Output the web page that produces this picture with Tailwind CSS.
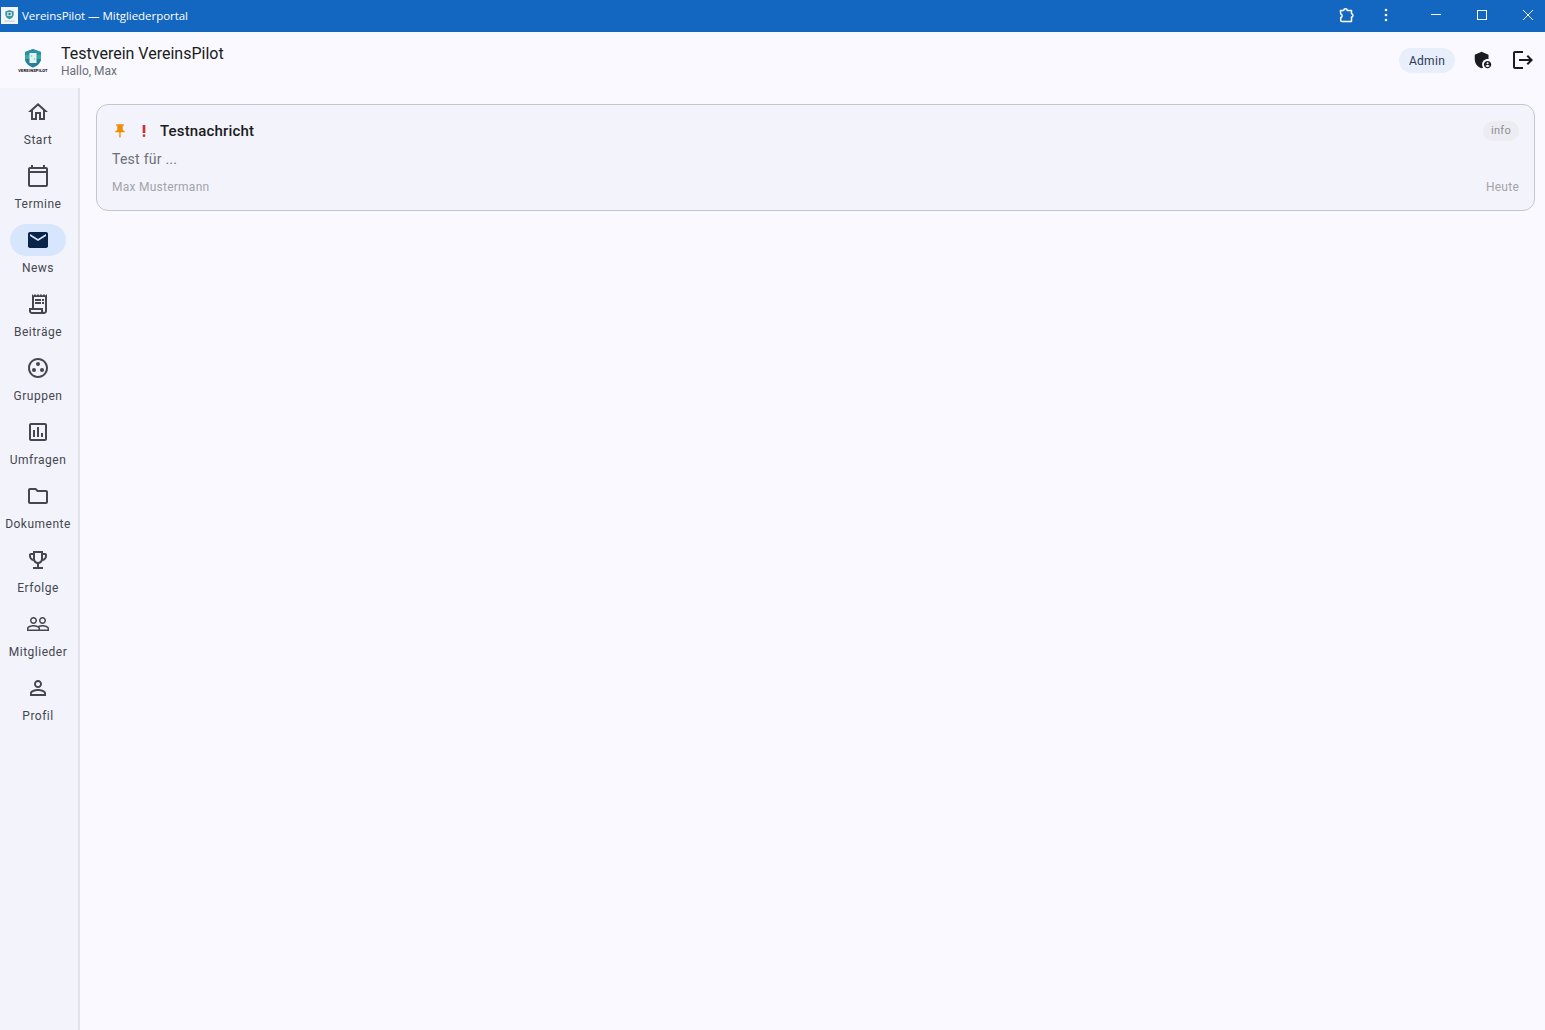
<!DOCTYPE html>
<html lang="de">
<head>
<meta charset="utf-8">
<title>VereinsPilot — Mitgliederportal</title>
<script src="https://cdn.jsdelivr.net/npm/@tailwindcss/browser@4"></script>
</head>
<body class="h-[1030px] w-[1545px] overflow-hidden bg-[#f9f9ff] font-['Roboto',sans-serif] text-[#1a1c20] flex flex-col">

<!-- Window title bar -->
<div class="h-8 shrink-0 bg-[#1467c0] flex items-center text-white">
  <div class="w-[17px] h-[17px] ml-[1px] mb-[1px] bg-[#f2f6f8] flex items-center justify-center">
    <svg viewBox="0 0 16 16" class="w-[15px] h-[15px]"><path d="M8 2l4.500 1.600v3.400c0 2.500-2 4.200-4.500 5-2.500-.8-4.500-2.500-4.500-5V3.600z" fill="#3c9aa5"/><path d="M5.500 4.500h5v4h-5z" fill="#cfe8e6"/><circle cx="8" cy="6.500" r="1.300" fill="#2f7f8a"/><path d="M2.500 14h11" stroke="#b9cdd6" stroke-width="1"/></svg>
  </div>
  <span class="ml-1 mb-[1px] font-['Open_Sans',sans-serif] text-[11.5px] tracking-[-0.04px] leading-none">VereinsPilot — Mitgliederportal</span>
  <div class="ml-auto flex items-center mb-[2px]">
    <svg viewBox="0 0 16 16" class="w-4 h-4 mr-[28px] -translate-x-[1px]" fill="none" stroke="white" stroke-width="1.500" stroke-linejoin="round"><path d="M1.500 3.500h3.200c.1-2.200 3.400-2.200 3.500 0h4.300v3.200c1.900.2 1.900 3.200 0 3.400v4.400h-9.500c-.8 0-1.300-.5-1.300-1.300v-2.700c1.900-.3 1.900-3.200 0-3.500z"/></svg>
    <svg viewBox="0 0 4 14" class="w-1 h-3.5 mr-[43px]" fill="white"><circle cx="2" cy="2" r="1.300"/><circle cx="2" cy="7" r="1.300"/><circle cx="2" cy="12" r="1.300"/></svg>
    <svg viewBox="0 0 10 10" class="w-2.5 h-2.5 mr-[36px]" fill="none" stroke="white" stroke-width="1"><path d="M0 4.500h10"/></svg>
    <svg viewBox="0 0 10 10" class="w-2.5 h-2.5 mr-[36px]" fill="none" stroke="white" stroke-width="1"><rect x=".5" y=".5" width="9" height="9"/></svg>
    <svg viewBox="0 0 10 10" class="w-2.5 h-2.5 mr-3" fill="none" stroke="white" stroke-width="1"><path d="M0 0l10 10M10 0L0 10"/></svg>
  </div>
</div>

<!-- App header -->
<div class="h-14 shrink-0 flex items-center">
  <div class="w-[61px] shrink-0 flex justify-center">
    <div class="flex flex-col items-center ml-[5px]">
      <svg viewBox="0 0 20 20" class="w-[20px] h-[20px]"><path d="M10 1l8 3v6c0 5-3.500 8-8 9.500C5.500 18 2 15 2 10V4z" fill="#35ad9c"/><path d="M10 1l8 3v3H2V4z" fill="#2c8fa6"/><path d="M2 11h16c-.5 4-4 7-8 8.500C6 18 2.500 15 2 11z" fill="#2a7f98"/><rect x="6.500" y="5" width="7" height="10" fill="#e4f3f2"/><circle cx="8.500" cy="8" r=".8" fill="#7fbfc6"/><circle cx="11.500" cy="11" r=".8" fill="#7fbfc6"/></svg>
      <span class="text-[4px] leading-[4px] font-bold tracking-[0.2px] text-black mt-[1px] whitespace-nowrap">VEREINSPILOT</span>
    </div>
  </div>
  <div class="flex flex-col mt-[2px]">
    <span class="text-base leading-[20px] text-[#1a1c20]">Testverein VereinsPilot</span>
    <span class="text-[12px] leading-[14px] text-[#6d6f76]">Hallo, Max</span>
  </div>
  <div class="ml-auto flex items-center">
    <div class="h-[25px] w-14 rounded-full bg-[#e8eefc] flex items-center justify-center pt-[1px] text-[12px] tracking-[0.3px] text-[#2b3a55] mr-[1px]">Admin</div>
    <svg viewBox="0 0 24 24" class="w-[22px] h-[22px] ml-[16px]" fill="#1a1c20"><path d="M17 11c.34 0 .67.04 1 .09V6.270L10.500 3 3 6.270v4.910c0 4.540 3.200 8.790 7.500 9.820.55-.13 1.080-.32 1.600-.55-.69-.98-1.100-2.170-1.100-3.450 0-3.310 2.690-6 6-6z"/><path d="M17 13c-2.210 0-4 1.790-4 4s1.790 4 4 4 4-1.790 4-4-1.790-4-4-4zm0 1.380c.62 0 1.120.51 1.120 1.120s-.51 1.120-1.120 1.120-1.120-.51-1.120-1.120.5-1.120 1.120-1.120zm0 5.370c-.93 0-1.740-.46-2.240-1.170.05-.72 1.510-1.080 2.240-1.080s2.190.36 2.240 1.080c-.5.71-1.310 1.170-2.240 1.170z"/></svg>
    <svg viewBox="0 0 24 24" class="w-6 h-6 ml-[17px] mr-2.5" fill="#1a1c20"><path d="M17 7l-1.410 1.410L18.170 11H8v2h10.170l-2.580 2.580L17 17l5-5zM4 5h8V3H4c-1.100 0-2 .9-2 2v14c0 1.100.9 2 2 2h8v-2H4V5z"/></svg>
  </div>
</div>

<div class="flex-1 flex min-h-0">
  <!-- Navigation rail -->
  <nav class="w-20 shrink-0 bg-[#f3f3fb] border-r-2 border-[#e2e2e9] pt-2 pr-[2px] flex flex-col items-center gap-3 text-[12px] leading-4 tracking-[0.5px] text-[#44474e]">
    <a class="flex flex-col items-center gap-1"><span class="w-14 h-8 flex items-center justify-center"><svg viewBox="0 0 24 24" class="w-6 h-6" fill="#44474e"><path d="M12 5.690l5 4.500V18h-2v-6H9v6H7v-7.810l5-4.500M12 3L2 12h3v8h6v-6h2v6h6v-8h3L12 3z"/></svg></span><span>Start</span></a>
    <a class="flex flex-col items-center gap-1"><span class="w-14 h-8 flex items-center justify-center"><svg viewBox="0 0 24 24" class="w-6 h-6" fill="#44474e" fill-rule="evenodd"><path d="M20 3h-1V1h-2v2H7V1H5v2H4c-1.100 0-2 .9-2 2v16c0 1.100.9 2 2 2h16c1.100 0 2-.9 2-2V5c0-1.100-.9-2-2-2zm0 18H4V9h16v12zm0-14H4V5h16v2z"/></svg></span><span>Termine</span></a>
    <a class="flex flex-col items-center gap-1"><span class="w-14 h-8 rounded-full bg-[#d8e6fd] flex items-center justify-center"><svg viewBox="0 0 24 24" class="w-6 h-6" fill="#0a2348"><path d="M20 4H4c-1.100 0-1.990.9-1.990 2L2 18c0 1.100.9 2 2 2h16c1.100 0 2-.9 2-2V6c0-1.100-.9-2-2-2zm0 4l-8 5-8-5V6l8 5 8-5v2z"/></svg></span><span>News</span></a>
    <a class="flex flex-col items-center gap-1"><span class="w-14 h-8 flex items-center justify-center"><svg viewBox="0 0 24 24" class="w-6 h-6" fill="#44474e"><path d="M19.500 3.500L18 2l-1.500 1.500L15 2l-1.500 1.500L12 2l-1.500 1.500L9 2 7.500 3.500 6 2v14H3v3c0 1.660 1.340 3 3 3h12c1.660 0 3-1.340 3-3V2l-1.500 1.500zM15 20H6c-.55 0-1-.45-1-1v-1h10v2zm4-1c0 .55-.45 1-1 1s-1-.45-1-1v-3H8V5h11v14z"/><path d="M9 7h6v2H9zM16 7h2v2h-2zM9 10h6v2H9zM16 10h2v2h-2z"/></svg></span><span>Beiträge</span></a>
    <a class="flex flex-col items-center gap-1"><span class="w-14 h-8 flex items-center justify-center"><svg viewBox="0 0 24 24" class="w-6 h-6" fill="#44474e"><path d="M12 2C6.480 2 2 6.480 2 12s4.480 10 10 10 10-4.480 10-10S17.520 2 12 2zm0 18c-4.410 0-8-3.590-8-8s3.590-8 8-8 8 3.590 8 8-3.590 8-8 8z"/><circle cx="8" cy="14" r="2"/><circle cx="12" cy="8" r="2"/><circle cx="16" cy="14" r="2"/></svg></span><span>Gruppen</span></a>
    <a class="flex flex-col items-center gap-1"><span class="w-14 h-8 flex items-center justify-center"><svg viewBox="0 0 24 24" class="w-6 h-6" fill="#44474e"><path d="M19 3H5c-1.100 0-2 .9-2 2v14c0 1.100.9 2 2 2h14c1.100 0 2-.9 2-2V5c0-1.100-.9-2-2-2zm0 16H5V5h14v14z"/><path d="M7 10h2v7H7zM15 13h2v4h-2zM11 7h2v10h-2z"/></svg></span><span>Umfragen</span></a>
    <a class="flex flex-col items-center gap-1"><span class="w-14 h-8 flex items-center justify-center"><svg viewBox="0 0 24 24" class="w-6 h-6" fill="#44474e"><path d="M9.170 6l2 2H20v10H4V6h5.170M10 4H4c-1.100 0-1.990.9-1.990 2L2 18c0 1.100.9 2 2 2h16c1.100 0 2-.9 2-2V8c0-1.100-.9-2-2-2h-8l-2-2z"/></svg></span><span>Dokumente</span></a>
    <a class="flex flex-col items-center gap-1"><span class="w-14 h-8 flex items-center justify-center"><svg viewBox="0 0 24 24" class="w-6 h-6" fill="#44474e"><path d="M19 5h-2V3H7v2H5c-1.100 0-2 .9-2 2v1c0 2.550 1.920 4.630 4.390 4.940.63 1.500 1.980 2.630 3.610 2.960V19H7v2h10v-2h-4v-3.100c1.630-.33 2.980-1.460 3.610-2.960C19.080 12.630 21 10.550 21 8V7c0-1.100-.9-2-2-2zM5 8V7h2v3.820C5.840 10.400 5 9.300 5 8zm7 6c-1.650 0-3-1.350-3-3V5h6v6c0 1.650-1.350 3-3 3zm7-6c0 1.300-.84 2.400-2 2.820V7h2v1z"/></svg></span><span>Erfolge</span></a>
    <a class="flex flex-col items-center gap-1"><span class="w-14 h-8 flex items-center justify-center"><svg viewBox="0 0 24 24" class="w-6 h-6" fill="#44474e"><path d="M16.500 13c-1.200 0-3.070.34-4.500 1-1.430-.67-3.300-1-4.500-1C5.330 13 1 14.080 1 16.250V19h22v-2.750c0-2.170-4.330-3.250-6.500-3.250zm-4 4.500h-10v-1.250c0-.54 2.560-1.750 5-1.750s5 1.210 5 1.750v1.250zm9 0H14v-1.250c0-.46-.2-.86-.52-1.220.88-.3 1.960-.53 3.020-.53 2.440 0 5 1.210 5 1.750v1.250zM7.500 12c1.930 0 3.500-1.570 3.500-3.500S9.430 5 7.500 5 4 6.570 4 8.500 5.570 12 7.500 12zm0-5.500c1.100 0 2 .9 2 2s-.9 2-2 2-2-.9-2-2 .9-2 2-2zm9 5.500c1.930 0 3.500-1.570 3.500-3.500S18.430 5 16.500 5 13 6.570 13 8.500s1.570 3.500 3.500 3.500zm0-5.500c1.100 0 2 .9 2 2s-.9 2-2 2-2-.9-2-2 .9-2 2-2z"/></svg></span><span>Mitglieder</span></a>
    <a class="flex flex-col items-center gap-1"><span class="w-14 h-8 flex items-center justify-center"><svg viewBox="0 0 24 24" class="w-6 h-6" fill="#44474e"><path d="M12 5.900c1.160 0 2.100.94 2.100 2.100s-.94 2.100-2.100 2.100S9.900 9.160 9.900 8s.94-2.100 2.100-2.100m0 9c2.970 0 6.100 1.460 6.100 2.100v1.100H5.900V17c0-.64 3.130-2.100 6.100-2.100M12 4C9.790 4 8 5.790 8 8s1.790 4 4 4 4-1.790 4-4-1.790-4-4-4zm0 9c-2.670 0-8 1.340-8 4v3h16v-3c0-2.660-5.330-4-8-4z"/></svg></span><span>Profil</span></a>
  </nav>

  <!-- Content -->
  <main class="flex-1 pt-4 pl-4 pr-2.5">
    <div class="h-[107px] rounded-xl border border-[#c4c6cf] bg-[#f3f3fb] px-[15px] pt-[14px] flex flex-col">
      <div class="h-[24px] flex items-center">
        <svg viewBox="0 0 24 24" class="w-4 h-4" fill="#f08c00"><path d="M16 9V4h1c.55 0 1-.45 1-1s-.45-1-1-1H7c-.55 0-1 .45-1 1s.45 1 1 1h1v5c0 1.660-1.340 3-3 3v2h5.970v7l1 1 1-1v-7H19v-2c-1.660 0-3-1.340-3-3z"/></svg>
        <svg viewBox="0 0 24 24" class="w-4 h-4 ml-2" fill="#d32f2f"><circle cx="12" cy="19" r="2"/><path d="M10 3h4v12h-4z"/></svg>
        <span class="ml-2 text-[15px] font-medium tracking-[0.15px] text-[#1a1c20]">Testnachricht</span>
        <span class="ml-auto h-5 px-2 pt-[1px] rounded-full bg-[#ececf2] flex items-center text-[11px] tracking-[0.3px] text-[#8d8f96]">info</span>
      </div>
      <p class="mt-[6px] text-sm leading-5 tracking-[0.25px] text-[#6d6f76]">Test für ...</p>
      <div class="mt-[10px] flex justify-between text-[12px] leading-4 tracking-[0.25px] text-[#a2a4aa]">
        <span>Max Mustermann</span><span>Heute</span>
      </div>
    </div>
  </main>
</div>
</body>
</html>
